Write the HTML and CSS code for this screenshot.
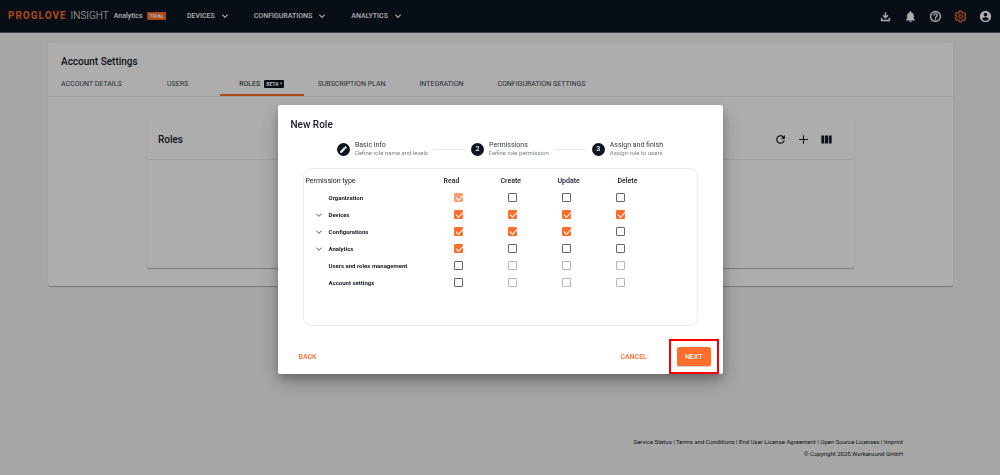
FILE: index.html
```html
<!DOCTYPE html>
<html lang="en">
<head>
<meta charset="utf-8">
<meta name="viewport" content="width=device-width, initial-scale=1">
<title>Account Settings</title>
<link rel="stylesheet" href="styles.css">
</head>
<body>
<svg class="sprite" aria-hidden="true">
  <symbol id="chevron" viewBox="0 0 24 24"><path d="M4 8l8 8 8-8" fill="none" stroke="currentColor" stroke-width="3.4"/></symbol>
  <symbol id="chevron-thin" viewBox="0 0 24 24"><path d="M4 8l8 8 8-8" fill="none" stroke="currentColor" stroke-width="3"/></symbol>
</svg>
<div class="page">
  <header class="topbar">
    <div class="brand">
      <span class="brand-name">PROGLOVE</span>
      <span class="brand-product">INSIGHT</span>
      <span class="brand-plan">Analytics</span>
      <span class="trial">TRIAL</span>
    </div>
    <nav class="menu">
      <button class="menu-item" type="button">DEVICES <svg class="caret"><use href="#chevron"/></svg></button>
      <button class="menu-item" type="button">CONFIGURATIONS <svg class="caret"><use href="#chevron"/></svg></button>
      <button class="menu-item" type="button">ANALYTICS <svg class="caret"><use href="#chevron"/></svg></button>
    </nav>
    <div class="tools">
      <button class="icon-button" type="button" aria-label="Downloads"><svg viewBox="0 0 24 24"><path d="M10.700 4h2.600v7.200l2.300-2.300 1.800 1.800-5.400 5.400-5.400-5.400 1.800-1.800 2.300 2.300zM3.500 14.500h2.600v3.500h11.800v-3.500h2.600v6.100h-17z"/></svg></button>
      <button class="icon-button" type="button" aria-label="Notifications"><svg viewBox="0 0 24 24"><path d="M12 22c1.100 0 2-.9 2-2h-4c0 1.100.89 2 2 2zm6-6v-5c0-3.070-1.640-5.640-4.500-6.320V4c0-.83-.67-1.500-1.500-1.500s-1.500.67-1.500 1.500v.68C7.630 5.360 6 7.920 6 11v5l-2 2v1h16v-1l-2-2z" stroke="currentColor" stroke-width=".6"/></svg></button>
      <button class="icon-button" type="button" aria-label="Help"><svg viewBox="0 0 24 24"><path d="M11 18h2v-2h-2v2zm1-16C6.480 2 2 6.480 2 12s4.480 10 10 10 10-4.480 10-10S17.520 2 12 2zm0 18c-4.410 0-8-3.590-8-8s3.590-8 8-8 8 3.590 8 8-3.590 8-8 8zm0-14c-2.210 0-4 1.790-4 4h2c0-1.100.9-2 2-2s2 .9 2 2c0 2-3 1.750-3 5h2c0-2.250 3-2.500 3-5 0-2.210-1.790-4-4-4z" stroke="currentColor" stroke-width=".6"/></svg></button>
      <button class="icon-button active" type="button" aria-label="Settings"><svg viewBox="0 0 24 24"><path d="M19.430 12.980c.04-.32.07-.64.07-.98s-.03-.66-.07-.98l2.110-1.650c.19-.15.24-.42.12-.64l-2-3.460c-.12-.22-.39-.3-.61-.22l-2.490 1c-.52-.4-1.080-.73-1.690-.98l-.38-2.650C14.460 2.180 14.250 2 14 2h-4c-.25 0-.46.18-.49.42l-.38 2.650c-.61.25-1.170.59-1.690.98l-2.490-1c-.23-.09-.49 0-.61.22l-2 3.460c-.13.22-.07.49.12.64l2.110 1.650c-.04.32-.07.65-.07.98s.03.66.07.98l-2.110 1.650c-.19.15-.24.42-.12.64l2 3.460c.12.22.39.3.61.22l2.490-1c.52.4 1.080.73 1.690.98l.38 2.650c.03.24.24.42.49.42h4c.25 0 .46-.18.49-.42l.38-2.650c.61-.25 1.170-.59 1.690-.98l2.490 1c.23.09.49 0 .61-.22l2-3.460c.12-.22.07-.49-.12-.64z" fill="none" stroke="currentColor" stroke-width="2.200"/><circle cx="12" cy="12" r="3.200" fill="none" stroke="currentColor" stroke-width="2.200"/></svg></button>
      <button class="icon-button" type="button" aria-label="Account"><svg viewBox="0 0 24 24"><path fill-rule="evenodd" d="M12 1.500a10.500 10.500 0 1 0 0 21 10.500 10.500 0 0 0 0-21zm0 3.500a3.400 3.400 0 1 1 0 6.800 3.400 3.400 0 0 1 0-6.800zm0 15.200a7.600 7.600 0 0 1-6.200-3.400c0-2.200 4.100-3.400 6.200-3.400s6.200 1.200 6.200 3.400a7.600 7.600 0 0 1-6.200 3.400z"/></svg></button>
    </div>
  </header>

  <main class="card">
    <h1 class="title">Account Settings</h1>
    <nav class="tabs">
      <a class="tab" href="#details">ACCOUNT DETAILS</a>
      <a class="tab" href="#users">USERS</a>
      <a class="tab selected" href="#roles">ROLES <span class="beta">BETA *</span></a>
      <a class="tab" href="#plan">SUBSCRIPTION PLAN</a>
      <a class="tab" href="#integration">INTEGRATION</a>
      <a class="tab" href="#configuration">CONFIGURATION SETTINGS</a>
    </nav>
    <section class="roles">
      <div class="roles-head">
        <h2 class="title">Roles</h2>
        <div class="roles-tools">
          <button class="icon-button" type="button" aria-label="Refresh"><svg viewBox="0 0 24 24"><path d="M17.650 6.350C16.200 4.900 14.210 4 12 4c-4.420 0-7.990 3.580-7.990 8s3.570 8 7.990 8c3.730 0 6.840-2.550 7.730-6h-2.080c-.82 2.330-3.040 4-5.650 4-3.310 0-6-2.690-6-6s2.690-6 6-6c1.660 0 3.140.69 4.220 1.780L13 11h7V4l-2.350 2.350z" stroke="currentColor" stroke-width=".3"/></svg></button>
          <button class="icon-button" type="button" aria-label="Add role"><svg viewBox="0 0 24 24"><path d="M20 13h-7v7h-2v-7H4v-2h7V4h2v7h7z"/></svg></button>
          <button class="icon-button" type="button" aria-label="Columns"><svg viewBox="0 0 24 24"><path d="M2.500 4.500h5.400v15H2.500zM9.300 4.500h5.400v15H9.300zM16.100 4.500h5.400v15h-5.400z"/></svg></button>
        </div>
      </div>
    </section>
  </main>

  <footer class="footer">
    <div><a href="#status">Service Status</a> | <a href="#terms">Terms and Conditions</a> | <a href="#eula">End User License Agreement</a> | <a href="#licenses">Open Source Licenses</a> | <a href="#imprint">Imprint</a></div>
    <div>© Copyright 2025 Workaround GmbH</div>
  </footer>
</div>

<div class="backdrop">
  <form class="dialog" role="dialog" aria-labelledby="dialog-title">
    <h2 class="title" id="dialog-title">New Role</h2>
    <ol class="steps">
      <li class="step"><span class="dot"><svg viewBox="0 0 24 24"><path d="M1 18.500V23h4.500L18 10.500 13.500 6zM22.200 6.300c.6-.6.6-1.400 0-2l-2.500-2.500c-.6-.6-1.400-.6-2 0L15 4.500 19.500 9z" stroke="currentColor" stroke-width="1.500"/></svg></span><span class="step-text">Basic info<small>Define role name and levels</small></span></li>
      <li class="step"><span class="dot">2</span><span class="step-text">Permissions<small>Define role permission</small></span></li>
      <li class="step"><span class="dot">3</span><span class="step-text">Assign and finish<small>Assign role to users</small></span></li>
    </ol>
    <div class="panel">
      <table class="permissions">
        <colgroup><col class="col-toggle"><col class="col-name"><col class="col-check"><col class="col-check"><col class="col-check"><col class="col-check"><col></colgroup>
        <thead>
          <tr><th class="type" colspan="2">Permission type</th><th class="read">Read</th><th class="create">Create</th><th class="update">Update</th><th class="delete">Delete</th><th></th></tr>
        </thead>
        <tbody>
          <tr><td></td><th scope="row">Organization</th><td><input type="checkbox" aria-label="Organization read" checked disabled></td><td><input type="checkbox" aria-label="Organization create"></td><td><input type="checkbox" aria-label="Organization update"></td><td><input type="checkbox" aria-label="Organization delete"></td><td></td></tr>
          <tr><td><button class="expand" type="button" aria-label="Expand Devices"><svg><use href="#chevron-thin"/></svg></button></td><th scope="row">Devices</th><td><input type="checkbox" aria-label="Devices read" checked></td><td><input type="checkbox" aria-label="Devices create" checked></td><td><input type="checkbox" aria-label="Devices update" checked></td><td><input type="checkbox" aria-label="Devices delete" checked></td><td></td></tr>
          <tr><td><button class="expand" type="button" aria-label="Expand Configurations"><svg><use href="#chevron-thin"/></svg></button></td><th scope="row">Configurations</th><td><input type="checkbox" aria-label="Configurations read" checked></td><td><input type="checkbox" aria-label="Configurations create" checked></td><td><input type="checkbox" aria-label="Configurations update" checked></td><td><input type="checkbox" aria-label="Configurations delete"></td><td></td></tr>
          <tr><td><button class="expand" type="button" aria-label="Expand Analytics"><svg><use href="#chevron-thin"/></svg></button></td><th scope="row">Analytics</th><td><input type="checkbox" aria-label="Analytics read" checked></td><td><input type="checkbox" aria-label="Analytics create"></td><td><input type="checkbox" aria-label="Analytics update"></td><td><input type="checkbox" aria-label="Analytics delete"></td><td></td></tr>
          <tr><td></td><th scope="row">Users and roles management</th><td><input type="checkbox" aria-label="Users and roles read"></td><td><input type="checkbox" aria-label="Users and roles create" disabled></td><td><input type="checkbox" aria-label="Users and roles update" disabled></td><td><input type="checkbox" aria-label="Users and roles delete" disabled></td><td></td></tr>
          <tr><td></td><th scope="row">Account settings</th><td><input type="checkbox" aria-label="Account settings read"></td><td><input type="checkbox" aria-label="Account settings create" disabled></td><td><input type="checkbox" aria-label="Account settings update" disabled></td><td><input type="checkbox" aria-label="Account settings delete" disabled></td><td></td></tr>
        </tbody>
      </table>
    </div>
    <div class="actions">
      <button class="text-button back" type="button">BACK</button>
      <button class="text-button" type="button">CANCEL</button>
      <div class="primary"><button class="next-button" type="button">NEXT</button></div>
    </div>
  </form>
</div>
</body>
</html>
```

FILE: styles.css
```css
* { box-sizing: border-box; }

body {
  margin: 0;
  font-family: Roboto, "Liberation Sans", sans-serif;
  font-size: 7px;
  line-height: 10px;
  color: #141c26;
  background: #f5f5f5;
}

button {
  display: flex;
  align-items: center;
  border: 0;
  padding: 0;
  background: none;
  color: inherit;
  font: inherit;
}

a { color: inherit; text-decoration: none; }
svg { display: block; fill: currentColor; }
.sprite { position: absolute; width: 0; height: 0; }
.page { min-height: 100vh; display: flex; flex-direction: column; }

.topbar {
  display: flex;
  align-items: center;
  height: 33px;
  padding: 0 8px;
  background: #0d1520;
  border-bottom: 1px solid #59616b;
  color: #fff;
}
.brand { display: flex; align-items: center; width: 179px; }
.brand-name { font-size: 10px; font-weight: 700; letter-spacing: 1px; color: #ff6d2a; margin-right: 4px; }
.brand-product { font-size: 10px; font-weight: 300; margin-right: 5px; }
.brand-plan { font-weight: 500; margin-right: 4px; }
.trial {
  padding: 0 3px;
  font-size: 5px;
  font-weight: 700;
  line-height: 8px;
  border-radius: 1px;
  background: #ff6d2a;
}
.menu { display: flex; gap: 25px; }
.menu-item { gap: 6px; font-weight: 500; }
.caret { width: 8px; height: 8px; }
.tools { display: flex; gap: 12px; margin-left: auto; }
.icon-button svg { width: 13px; height: 13px; }
.icon-button.active { color: #ff6d2a; }

.title { margin: 0; font-size: 10px; font-weight: 500; line-height: 14px; }

.card {
  margin: 10px 47px 0 48px;
  padding-bottom: 18px;
  border-radius: 2px;
  background: #fff;
  box-shadow: 0 1px 1px rgba(0, 0, 0, .3);
}
.card > .title { padding: 12px 13px 4px; }
.tabs { display: flex; border-bottom: 1px solid #ececec; }
.tab {
  display: flex;
  align-items: center;
  justify-content: center;
  gap: 4px;
  min-width: 84px;
  height: 23px;
  padding: 0 14px 2px;
  color: #3b434d;
}
.tab:first-child { padding-left: 13px; }
.tab.selected { border-bottom: 2px solid #ff6d2a; padding-bottom: 0; color: #141c26; }
.beta {
  padding: 0 2px;
  font-size: 5px;
  font-weight: 700;
  line-height: 8px;
  border-radius: 1px;
  background: #0d1520;
  color: #fff;
}
.roles {
  min-height: 150px;
  margin: 21px 99px 0;
  border-radius: 2px;
  box-shadow: 0 1px 1px rgba(0, 0, 0, .3);
}
.roles-head {
  display: flex;
  align-items: center;
  justify-content: space-between;
  height: 42px;
  padding: 2px 21px 0 11px;
  border-bottom: 1px solid #ececec;
}
.roles-tools { display: flex; gap: 10px; }

.footer {
  margin-top: auto;
  padding: 0 97px 15px;
  font-size: 6px;
  line-height: 12px;
  text-align: right;
}

.backdrop {
  position: fixed;
  inset: 0;
  display: flex;
  align-items: center;
  justify-content: center;
  padding-top: 4px;
  background: rgba(0, 0, 0, .32);
}
.dialog {
  width: 445px;
  padding: 13px 0 0;
  border-radius: 2px;
  background: #fff;
  box-shadow: 0 5px 8px rgba(0, 0, 0, .2), 0 8px 20px rgba(0, 0, 0, .24);
}
.dialog > .title { padding: 0 13px; }

.steps {
  display: flex;
  justify-content: center;
  margin: 9px 0 0;
  padding: 0;
  list-style: none;
}
.step { display: flex; align-items: center; gap: 5px; }
.step + .step::before { content: ""; width: 33px; height: 1px; margin-left: 5px; background: #ececec; }
.dot {
  display: flex;
  align-items: center;
  justify-content: center;
  width: 13px;
  height: 13px;
  border-radius: 50%;
  background: #0d1520;
  color: #fff;
  font-weight: 500;
}
.dot svg { width: 7px; height: 7px; }
.step-text { line-height: 8px; color: #333b45; }
.step-text small { display: block; font-size: 6px; line-height: 8px; color: #7b8087; }

.panel {
  min-height: 158px;
  margin: 11px 25px 0;
  padding-top: 4px;
  border: 1px solid #ececec;
  border-radius: 8px;
}
.permissions { width: 100%; table-layout: fixed; border-collapse: collapse; }
.permissions tr { height: 17px; }
.permissions th, .permissions td { padding: 0; text-align: left; vertical-align: middle; }
.permissions thead th { font-weight: 500; }
.permissions tbody th { font-size: 6px; font-weight: 700; }
.permissions thead tr { height: 16px; }
.permissions .type { padding-left: 2px; font-weight: 400; }
.permissions .read { padding-left: 12px; }
.permissions .create { padding-left: 15px; }
.permissions .update { padding-left: 18px; }
.permissions .delete { padding-left: 24px; }
.col-toggle { width: 25px; }
.col-name { width: 103px; }
.col-check { width: 54px; }
.expand { padding-left: 11px; color: #555; }
.expand svg { width: 8px; height: 8px; }

input[type="checkbox"] {
  appearance: none;
  display: block;
  width: 9px;
  height: 9px;
  margin: 0 auto;
  border: 1px solid #666;
  border-radius: 1px;
  background: #fff;
}
input[type="checkbox"]:checked { border-color: #ff6d2a; background: #ff6d2a; }
input[type="checkbox"]:checked::after {
  content: "";
  display: block;
  width: 6px;
  height: 3px;
  margin: 1px 0 0 1px;
  border: solid #fff;
  border-width: 0 0 1px 1px;
  transform: rotate(-45deg);
}
input[type="checkbox"]:disabled { border-color: #b5b5b5; }
input[type="checkbox"]:checked:disabled { border-color: #ff9c6d; background: #ff9c6d; }

.actions { display: flex; align-items: center; padding: 13px 4px 0 21px; }
.text-button { color: #ff6d2a; font-weight: 500; }
.back { margin-right: auto; }
.primary { margin-left: 22px; padding: 6px; border: 2px solid #f00; }
.next-button {
  height: 19px;
  padding: 0 8px;
  border-radius: 2px;
  background: #ff6d2a;
  color: #fff;
  font-weight: 500;
  box-shadow: 0 1px 1px rgba(0, 0, 0, .2);
}
```
